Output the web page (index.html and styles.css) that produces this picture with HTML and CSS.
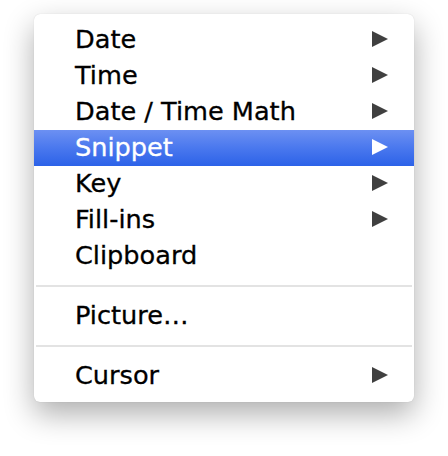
FILE: index.html
```html
<!DOCTYPE html>
<html>
<head>
<meta charset="utf-8">
<link rel="stylesheet" href="styles.css">
</head>
<body>
<div class="menu">
  <div class="item"><span class="label">Date</span><span class="arrow"></span></div>
  <div class="item"><span class="label">Time</span><span class="arrow"></span></div>
  <div class="item"><span class="label">Date / Time Math</span><span class="arrow"></span></div>
  <div class="item selected"><span class="label">Snippet</span><span class="arrow"></span></div>
  <div class="item"><span class="label">Key</span><span class="arrow"></span></div>
  <div class="item"><span class="label">Fill-ins</span><span class="arrow"></span></div>
  <div class="item"><span class="label">Clipboard</span></div>
  <div class="separator"></div>
  <div class="item"><span class="label">Picture…</span></div>
  <div class="separator"></div>
  <div class="item"><span class="label">Cursor</span><span class="arrow"></span></div>
</div>
</body>
</html>
```
FILE: styles.css
```css
html, body {
  margin: 0;
  background: #ffffff;
}
body {
  height: 456px;
  box-sizing: border-box;
  padding: 14px 34px;
  font-family: "DejaVu Sans", "Lucida Grande", sans-serif;
}
.menu {
  width: 380px;
  height: 388px;
  box-sizing: border-box;
  padding: 8px 0;
  background: #ffffff;
  border-radius: 6px;
  box-shadow: 0 0 1px rgba(0,0,0,0.18), 0 12px 30px rgba(0,0,0,0.32);
  display: flex;
  flex-direction: column;
}
.item {
  height: 36px;
  display: flex;
  align-items: center;
  justify-content: space-between;
  padding: 0 26px 0 41px;
  font-size: 25.6px;
  color: #000;
  -webkit-text-stroke: 0.3px currentColor;
}
.label {
  line-height: 36px;
  position: relative;
  top: -1px;
}
.arrow {
  width: 0;
  height: 0;
  border-top: 8px solid transparent;
  border-bottom: 8px solid transparent;
  border-left: 16px solid #404040;
  position: relative;
  top: -1px;
}
.selected {
  background: linear-gradient(to bottom, #6c90f2 0%, #4a78ee 50%, #2c62e8 100%);
  color: #ffffff;
}
.selected .arrow {
  border-left-color: #ffffff;
}
.separator {
  height: 24px;
  display: flex;
  align-items: center;
  padding: 0 2px;
}
.separator::before {
  content: "";
  display: block;
  width: 100%;
  height: 2px;
  background: #e3e3e3;
}
```
